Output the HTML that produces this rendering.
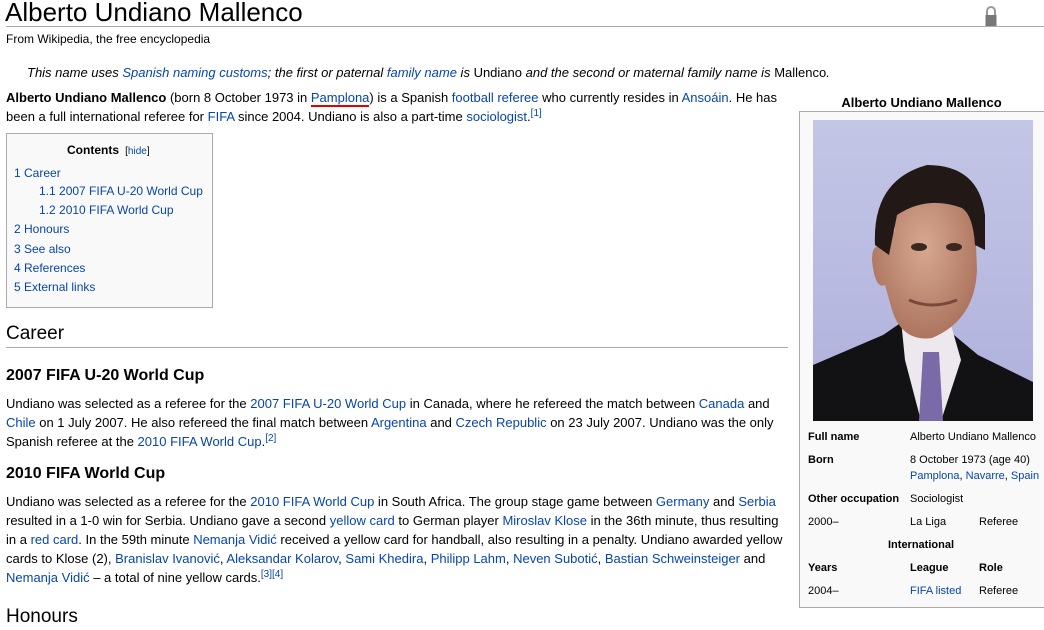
<!DOCTYPE html>
<html><head><meta charset="utf-8"><style>
*{margin:0;padding:0;box-sizing:border-box}
body{width:1044px;height:613px;overflow:hidden;background:#fff;font-family:"Liberation Sans",Arial,sans-serif;font-size:13px;color:#000;position:relative}
a{color:#0645ad;text-decoration:none}
.l{position:absolute;white-space:nowrap;line-height:19px}
sup{font-size:10px;line-height:0;vertical-align:5px}
b{font-weight:bold}
.ib{position:absolute;white-space:nowrap;font-size:11px;line-height:14px}
</style></head><body>
<div class="l" style="left:5px;top:-4px;font-size:26px;line-height:32px">Alberto Undiano Mallenco</div>
<div style="position:absolute;left:6px;top:26px;width:1038px;height:1px;background:#aaa"></div>
<svg style="position:absolute;left:984px;top:4px" width="14" height="22" viewBox="0 0 14 22"><path d="M3 11V7a4 4 0 0 1 8 0v4" fill="none" stroke="#999" stroke-width="2"/><rect x="1.5" y="11" width="11" height="11" fill="#777"/></svg>
<div class="l" style="left:6px;top:30px;font-size:12px">From Wikipedia, the free encyclopedia</div>
<div class="l" style="left:27px;top:63px;font-style:italic">This name uses <a href="#">Spanish naming customs</a>; the first or paternal <a href="#">family name</a> is <span style="font-style:normal">Undiano</span> and the second or maternal family name is <span style="font-style:normal">Mallenco</span>.</div>
<div class="l" style="left:6px;top:88px"><b>Alberto Undiano Mallenco</b> (born 8 October 1973 in <a href="#" style="border-bottom:2px solid #e00000;line-height:14px;display:inline-block">Pamplona</a>) is a Spanish <a href="#">football referee</a> who currently resides in <a href="#">Ansoáin</a>. He has</div>
<div class="l" style="left:6px;top:107px">been a full international referee for <a href="#">FIFA</a> since 2004. Undiano is also a part-time <a href="#">sociologist</a>.<sup><a href="#">[1]</a></sup></div>

<div style="position:absolute;left:6px;top:133px;width:207px;height:175px;border:1px solid #aaa;background:#f9f9f9"></div>
<div class="l" style="left:67px;top:141px;font-size:12px"><b>Contents</b> <span style="font-size:10px">&nbsp;[<a href="#">hide</a>]</span></div>
<div class="l" style="left:14px;top:164px;font-size:12px"><a href="#">1 Career</a></div>
<div class="l" style="left:39px;top:182px;font-size:12px"><a href="#">1.1 2007 FIFA U-20 World Cup</a></div>
<div class="l" style="left:39px;top:201px;font-size:12px"><a href="#">1.2 2010 FIFA World Cup</a></div>
<div class="l" style="left:14px;top:220px;font-size:12px"><a href="#">2 Honours</a></div>
<div class="l" style="left:14px;top:240px;font-size:12px"><a href="#">3 See also</a></div>
<div class="l" style="left:14px;top:259px;font-size:12px"><a href="#">4 References</a></div>
<div class="l" style="left:14px;top:278px;font-size:12px"><a href="#">5 External links</a></div>

<div class="l" style="left:6px;top:321px;font-size:19px;line-height:26px">Career</div>
<div style="position:absolute;left:6px;top:347px;width:782px;height:1px;background:#aaa"></div>
<div class="l" style="left:6px;top:365px;font-size:16px;line-height:22px;font-weight:bold">2007 FIFA U-20 World Cup</div>
<div class="l" style="left:6px;top:394px">Undiano was selected as a referee for the <a href="#">2007 FIFA U-20 World Cup</a> in Canada, where he refereed the match between <a href="#">Canada</a> and</div>
<div class="l" style="left:6px;top:413px"><a href="#">Chile</a> on 1 July 2007. He also refereed the final match between <a href="#">Argentina</a> and <a href="#">Czech Republic</a> on 23 July 2007. Undiano was the only</div>
<div class="l" style="left:6px;top:432px">Spanish referee at the <a href="#">2010 FIFA World Cup</a>.<sup><a href="#">[2]</a></sup></div>
<div class="l" style="left:6px;top:463px;font-size:16px;line-height:22px;font-weight:bold">2010 FIFA World Cup</div>
<div class="l" style="left:6px;top:492px">Undiano was selected as a referee for the <a href="#">2010 FIFA World Cup</a> in South Africa. The group stage game between <a href="#">Germany</a> and <a href="#">Serbia</a></div>
<div class="l" style="left:6px;top:511px">resulted in a 1-0 win for Serbia. Undiano gave a second <a href="#">yellow card</a> to German player <a href="#">Miroslav Klose</a> in the 36th minute, thus resulting</div>
<div class="l" style="left:6px;top:530px">in a <a href="#">red card</a>. In the 59th minute <a href="#">Nemanja Vidić</a> received a yellow card for handball, also resulting in a penalty. Undiano awarded yellow</div>
<div class="l" style="left:6px;top:549px">cards to Klose (2), <a href="#">Branislav Ivanović</a>, <a href="#">Aleksandar Kolarov</a>, <a href="#">Sami Khedira</a>, <a href="#">Philipp Lahm</a>, <a href="#">Neven Subotić</a>, <a href="#">Bastian Schweinsteiger</a> and</div>
<div class="l" style="left:6px;top:568px"><a href="#">Nemanja Vidić</a> – a total of nine yellow cards.<sup><a href="#">[3]</a><a href="#">[4]</a></sup></div>
<div class="l" style="left:6px;top:604px;font-size:19px;line-height:26px">Honours</div>

<div class="l" style="left:799px;top:93px;width:245px;text-align:center;font-weight:bold">Alberto Undiano Mallenco</div>
<div style="position:absolute;left:799px;top:111px;width:250px;height:497px;border:1px solid #aaa;background:#f9f9f9"></div>
<svg style="position:absolute;left:813px;top:120px" width="220" height="301" viewBox="0 0 220 301">
<defs><linearGradient id="bg" x1="0" y1="0" x2="0" y2="1"><stop offset="0" stop-color="#c4c6e6"/><stop offset="1" stop-color="#aeb0dc"/></linearGradient>
<radialGradient id="sk" cx=".5" cy=".45" r=".6"><stop offset="0" stop-color="#d8a890"/><stop offset="1" stop-color="#a8705a"/></radialGradient></defs>
<rect width="220" height="301" fill="url(#bg)"/>
<path d="M0 245 L70 215 L92 200 L135 210 L165 235 L220 262 L220 301 L0 301Z" fill="#121215"/>
<path d="M88 200 L138 205 L148 240 L128 301 L108 301 L92 240Z" fill="#ece8ee"/>
<path d="M110 232 L126 232 L130 301 L106 301Z" fill="#7a6aa8"/>
<g transform="translate(-16,0)">
<path d="M98 110 Q96 60 132 52 Q175 55 178 100 L180 150 Q178 200 135 218 Q105 222 95 190 L88 165 Q78 170 75 140 Q75 120 88 130Z" fill="url(#sk)"/>
<path d="M78 125 Q75 60 130 45 Q182 45 188 95 L188 130 L178 125 Q176 95 165 88 Q130 75 100 95 L92 135Z" fill="#221815"/>
<ellipse cx="122" cy="127" rx="8" ry="4" fill="#3a2820"/><ellipse cx="157" cy="127" rx="8" ry="4" fill="#3a2820"/>
<path d="M112 180 Q135 190 160 180" stroke="#7a4838" stroke-width="3" fill="none"/>
</g>
</svg>
<div class="ib" style="left:808px;top:430px;font-weight:bold">Full name</div>
<div class="ib" style="left:910px;top:430px">Alberto Undiano Mallenco</div>
<div class="ib" style="left:808px;top:453px;font-weight:bold">Born</div>
<div class="ib" style="left:910px;top:453px">8 October 1973 (age 40)</div>
<div class="ib" style="left:910px;top:469px"><a href="#">Pamplona</a>, <a href="#">Navarre</a>, <a href="#">Spain</a></div>
<div class="ib" style="left:808px;top:492px;font-weight:bold">Other occupation</div>
<div class="ib" style="left:910px;top:492px">Sociologist</div>
<div class="ib" style="left:808px;top:515px">2000–</div>
<div class="ib" style="left:910px;top:515px">La Liga</div>
<div class="ib" style="left:979px;top:515px">Referee</div>
<div class="ib" style="left:888px;top:538px;font-weight:bold">International</div>
<div class="ib" style="left:808px;top:561px;font-weight:bold">Years</div>
<div class="ib" style="left:910px;top:561px;font-weight:bold">League</div>
<div class="ib" style="left:979px;top:561px;font-weight:bold">Role</div>
<div class="ib" style="left:808px;top:584px">2004–</div>
<div class="ib" style="left:910px;top:584px"><a href="#">FIFA listed</a></div>
<div class="ib" style="left:979px;top:584px">Referee</div>
</body></html>
